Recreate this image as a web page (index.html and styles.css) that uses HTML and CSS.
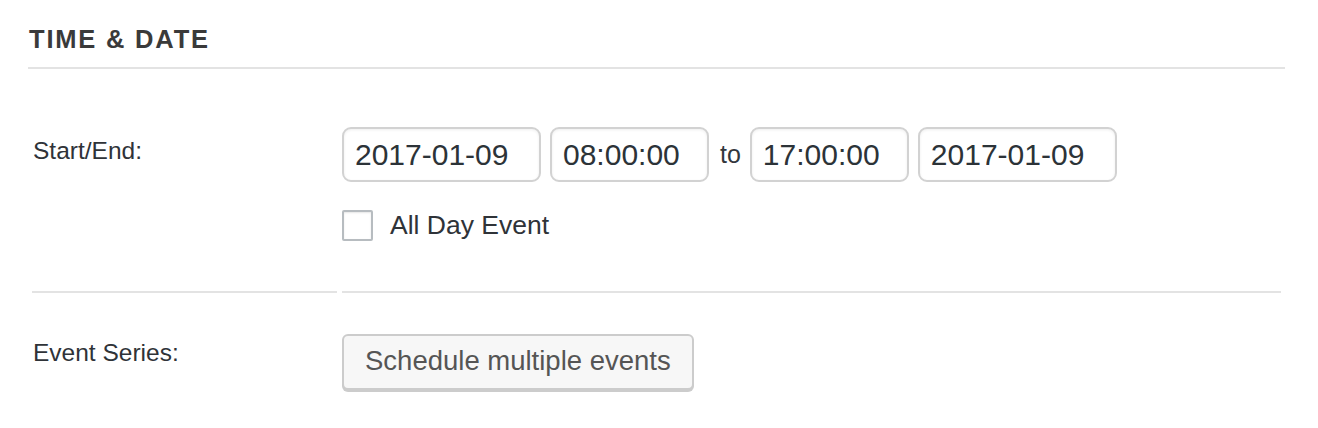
FILE: index.html
```html
<!DOCTYPE html>
<html lang="en">
<head>
<meta charset="utf-8">
<title>Time &amp; Date</title>
<link rel="stylesheet" href="styles.css">
</head>
<body>
<div class="panel">
  <h2 class="panel-title">TIME &amp; DATE</h2>
  <div class="form">
    <div class="row">
      <div class="label-cell first"><span class="label">Start/End:</span></div>
      <div class="field-cell first">
        <div class="dates">
          <input class="field wide" type="text" value="2017-01-09" readonly>
          <input class="field narrow" type="text" value="08:00:00" readonly>
          <span class="to">to</span>
          <input class="field narrow" type="text" value="17:00:00" readonly>
          <input class="field wide" type="text" value="2017-01-09" readonly>
        </div>
        <label class="allday">
          <input class="check" type="checkbox">
          <span>All Day Event</span>
        </label>
      </div>
    </div>
    <div class="row">
      <div class="label-cell second"><span class="label">Event Series:</span></div>
      <div class="field-cell second">
        <button class="btn" type="button">Schedule multiple events</button>
      </div>
    </div>
  </div>
</div>
</body>
</html>
```
FILE: styles.css
```css
* { box-sizing: border-box; }

html, body {
  margin: 0;
  padding: 0;
  background: #ffffff;
  font-family: "Liberation Sans", Arial, sans-serif;
  color: #32373c;
}

.panel {
  width: 1318px;
  height: 428px;
  padding: 27px 33px 0 28px;
  overflow: hidden;
}

.panel-title {
  margin: 0;
  padding: 0 0 16px 1px;
  font-size: 25.5px;
  line-height: 24px;
  font-weight: 700;
  letter-spacing: 1.8px;
  color: #3a3a3a;
  border-bottom: 2px solid #e3e3e3;
}

.form {
  padding: 0 4px 0 4px;
}

.row {
  display: grid;
  grid-template-columns: 305px 1fr;
  column-gap: 5px;
}

.label-cell,
.field-cell {
  border-bottom: 2px solid #e3e3e3;
}

.row:last-child .label-cell,
.row:last-child .field-cell {
  border-bottom: none;
}

.label {
  display: block;
  padding-left: 1px;
  font-size: 24.5px;
  line-height: 24px;
  color: #2f3338;
}

.label-cell.first { padding-top: 70px; }
.field-cell.first { padding: 58px 0 50px 0; }
.label-cell.second { padding-top: 48px; }
.field-cell.second { padding-top: 41px; }

.dates {
  display: flex;
  align-items: center;
}

.field {
  height: 55px;
  margin: 0 9px 0 0;
  padding: 0 0 0 11px;
  border: 2px solid #d2d2d2;
  border-radius: 9px;
  box-shadow: inset 0 1px 3px rgba(0, 0, 0, 0.07);
  background: #ffffff;
  font-family: "Liberation Sans", Arial, sans-serif;
  font-size: 30px;
  color: #2c3338;
  outline: none;
}

.field.wide { width: 199px; }
.field.narrow { width: 159px; }

.to {
  font-size: 25px;
  margin: 0 9px 0 2px;
  color: #32373c;
}

.allday {
  display: flex;
  align-items: center;
  margin-top: 28px;
  font-size: 26.5px;
  color: #2f3338;
}

.check {
  -webkit-appearance: none;
  appearance: none;
  width: 31px;
  height: 31px;
  margin: 0 17px 0 0;
  border: 2px solid #b7bcc0;
  border-radius: 2px;
  background: #ffffff;
  box-shadow: inset 0 1px 2px rgba(0, 0, 0, 0.1);
}

.btn {
  height: 56px;
  padding: 0 21px 2px 21px;
  border: 2px solid #cccccc;
  border-radius: 6px;
  background: #f7f7f7;
  box-shadow: 0 2px 0 #cccccc;
  font-family: "Liberation Sans", Arial, sans-serif;
  font-size: 27.5px;
  color: #555555;
}
```
